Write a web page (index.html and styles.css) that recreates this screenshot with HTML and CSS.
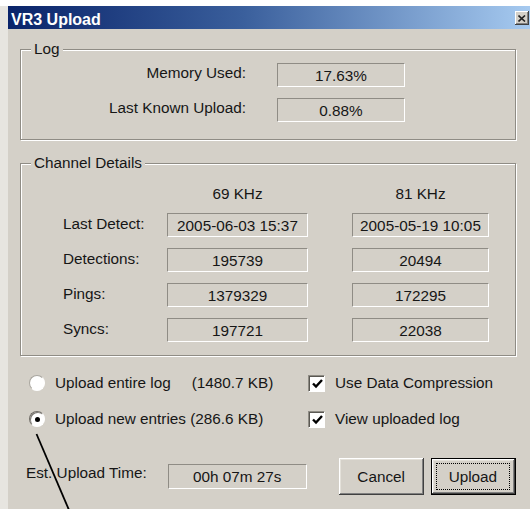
FILE: index.html
```html
<!DOCTYPE html>
<html lang="en">
<head>
<meta charset="utf-8">
<title>VR3 Upload</title>
<link rel="stylesheet" href="styles.css">
</head>
<body>
<div class="window">
  <div class="titlebar">
    <span class="title">VR3 Upload</span>
    <span class="close-btn">
      <svg width="8" height="7" viewBox="0 0 8 7"><path d="M0.5 0.5 L7 6.5 M7 0.5 L0.5 6.5" stroke="#222" stroke-width="1.6" fill="none"/></svg>
    </span>
  </div>
  <div class="content">
    <section class="group">
      <div class="legend">Log</div>
      <div class="log-grid">
        <span class="label label-right">Memory Used:</span>
        <span class="field">17.63%</span>
        <span class="label label-right">Last Known Upload:</span>
        <span class="field">0.88%</span>
      </div>
    </section>

    <section class="group group-channel">
      <div class="legend">Channel Details</div>
      <div class="channel-grid">
        <span></span>
        <span class="col-head">69 KHz</span>
        <span class="col-head">81 KHz</span>

        <span class="label">Last Detect:</span>
        <span class="field">2005-06-03 15:37</span>
        <span class="field">2005-05-19 10:05</span>

        <span class="label">Detections:</span>
        <span class="field">195739</span>
        <span class="field">20494</span>

        <span class="label">Pings:</span>
        <span class="field">1379329</span>
        <span class="field">172295</span>

        <span class="label">Syncs:</span>
        <span class="field">197721</span>
        <span class="field">22038</span>
      </div>
    </section>

    <div class="options">
      <div class="opt">
        <span class="radio"></span>
        <span>Upload entire log</span>
        <span class="size">(1480.7 KB)</span>
      </div>
      <div class="opt">
        <span class="check"><svg width="11" height="10" viewBox="0 0 11 10"><path d="M1 4.5 L4 7.5 L10 1" stroke="#000" stroke-width="2.4" fill="none"/></svg></span>
        <span>Use Data Compression</span>
      </div>
      <div class="opt">
        <span class="radio radio-on"><span class="dot"></span></span>
        <span>Upload new entries (286.6 KB)</span>
      </div>
      <div class="opt">
        <span class="check"><svg width="11" height="10" viewBox="0 0 11 10"><path d="M1 4.5 L4 7.5 L10 1" stroke="#000" stroke-width="2.4" fill="none"/></svg></span>
        <span>View uploaded log</span>
      </div>
    </div>

    <div class="action-row">
      <span class="est-label">Est. Upload Time:</span>
      <span class="field est-field">00h 07m 27s</span>
      <button class="btn btn-cancel">Cancel</button>
      <button class="btn btn-default"><span class="focus">Upload</span></button>
    </div>
  </div>
</div>
<svg class="pointer-line" width="530" height="509" viewBox="0 0 530 509">
  <line x1="36.5" y1="434" x2="69" y2="510" stroke="#000" stroke-width="1.8"/>
</svg>
</body>
</html>
```

FILE: styles.css
```css
html, body {
  margin: 0;
  padding: 0;
}

body {
  width: 530px;
  height: 509px;
  overflow: hidden;
  background: #ffffff;
  font-family: "Liberation Sans", Arial, sans-serif;
  font-size: 15.3px;
  color: #161616;
  position: relative;
}

.window {
  margin-top: 6px;
  height: 503px;
  border-left: 8px solid #e7e5e0;
  background: #d4d0c8;
}

/* caption bar */
.titlebar {
  height: 23px;
  display: flex;
  justify-content: space-between;
  align-items: flex-start;
  background: linear-gradient(to right, #0a246a 0%, #3a5f9c 45%, #a6caf0 100%);
}

.title {
  padding: 5px 0 0 3px;
  line-height: 18px;
  font-weight: bold;
  font-size: 16px;
  color: #ffffff;
}

.close-btn {
  width: 14px;
  height: 14px;
  margin: 5px 1px 0 0;
  box-sizing: border-box;
  display: flex;
  align-items: center;
  justify-content: center;
  background: #d4d0c8;
  box-shadow: inset -1px -1px 0 #404040, inset 1px 1px 0 #ffffff, inset -2px -2px 0 #808080;
}

.content {
  padding: 20px 14px 0 12px;
}

/* etched group boxes */
.group {
  border: 1px solid #8f8c85;
  box-shadow: inset 1px 1px 0 #ffffff, 1px 1px 0 #ffffff;
  padding-bottom: 17px;
}

.group-channel {
  margin-top: 23px;
  padding-bottom: 13px;
}

.legend {
  width: fit-content;
  margin: -10px 0 0 10px;
  padding: 0 3px;
  height: 18px;
  line-height: 18px;
  background: #d4d0c8;
}

.label {
  line-height: 18px;
  align-self: start;
  padding-top: 2px;
  white-space: nowrap;
}

.label-right {
  text-align: right;
  padding-top: 1px;
}

/* sunken read-only value boxes */
.field {
  box-sizing: border-box;
  height: 24px;
  padding-top: 1px;
  line-height: 21px;
  text-align: center;
  border: 1px solid;
  border-color: #8f8c85 #ffffff #ffffff #8f8c85;
  white-space: nowrap;
}

.log-grid {
  margin-top: 5px;
  display: grid;
  grid-template-columns: 225px 128px;
  grid-auto-rows: 24px;
  column-gap: 31px;
  row-gap: 11px;
}

.channel-grid {
  margin-top: 12px;
  padding-left: 42px;
  display: grid;
  grid-template-columns: 104px 185px 137px;
  grid-template-rows: 18px;
  grid-auto-rows: 24px;
  row-gap: 11px;
}

/* the middle column carries the space between the two value columns */
.channel-grid > :nth-child(3n + 2) {
  width: 141px;
}

.col-head {
  text-align: center;
  line-height: 18px;
  padding-top: 1px;
}

/* option controls */
.options {
  margin: 17px 0 0 9px;
  display: grid;
  grid-template-columns: 279px auto;
  grid-auto-rows: 20px;
  row-gap: 16px;
}

.opt {
  display: flex;
  align-items: center;
  line-height: 18px;
  white-space: nowrap;
}

.radio {
  width: 16px;
  height: 16px;
  box-sizing: border-box;
  margin-right: 10px;
  border-radius: 50%;
  border: 1px solid;
  border-color: #a9a69f #ffffff #ffffff #a9a69f;
  background: #ffffff;
  display: flex;
  align-items: center;
  justify-content: center;
}

.radio-on {
  border-color: #6f6c66 #ffffff #ffffff #6f6c66;
  box-shadow: inset 1px 1px 0 #7c7973;
}

.dot {
  width: 5px;
  height: 5px;
  border-radius: 50%;
  background: #000000;
}

.size {
  margin-left: 21px;
}

.check {
  width: 17px;
  height: 17px;
  box-sizing: border-box;
  margin-right: 10px;
  background: #ffffff;
  border: 1px solid;
  border-color: #8f8c85 #ffffff #ffffff #8f8c85;
  box-shadow: inset 1px 1px 0 #5a5852;
  display: flex;
  align-items: center;
  justify-content: center;
  padding: 1px 0 0 1px;
}

/* bottom row */
.action-row {
  margin-top: 29px;
  padding-left: 6px;
  height: 37px;
  display: flex;
  align-items: center;
}

.est-label {
  width: 142px;
  flex: none;
  line-height: 18px;
  padding-bottom: 7px;
  white-space: nowrap;
}

.est-field {
  width: 140px;
  height: 25px;
  line-height: 22px;
}

.btn {
  box-sizing: border-box;
  width: 86px;
  height: 37px;
  padding: 0;
  border: none;
  font: inherit;
  color: inherit;
  background: #d4d0c8;
  box-shadow: inset -1px -1px 0 #404040, inset 1px 1px 0 #ffffff, inset -2px -2px 0 #808080, inset 2px 2px 0 #e4e1da;
}

.btn-cancel {
  margin-left: 32px;
}

.btn-default {
  margin-left: 7px;
  border: 1px solid #000000;
  padding: 4px 5px 4px 4px;
  display: flex;
}

.focus {
  flex: 1;
  border: 1px dotted #000000;
  display: flex;
  align-items: center;
  justify-content: center;
}

/* hand-drawn pointer stroke across the dialog */
.pointer-line {
  position: absolute;
  left: 0;
  top: 0;
  pointer-events: none;
}
```
